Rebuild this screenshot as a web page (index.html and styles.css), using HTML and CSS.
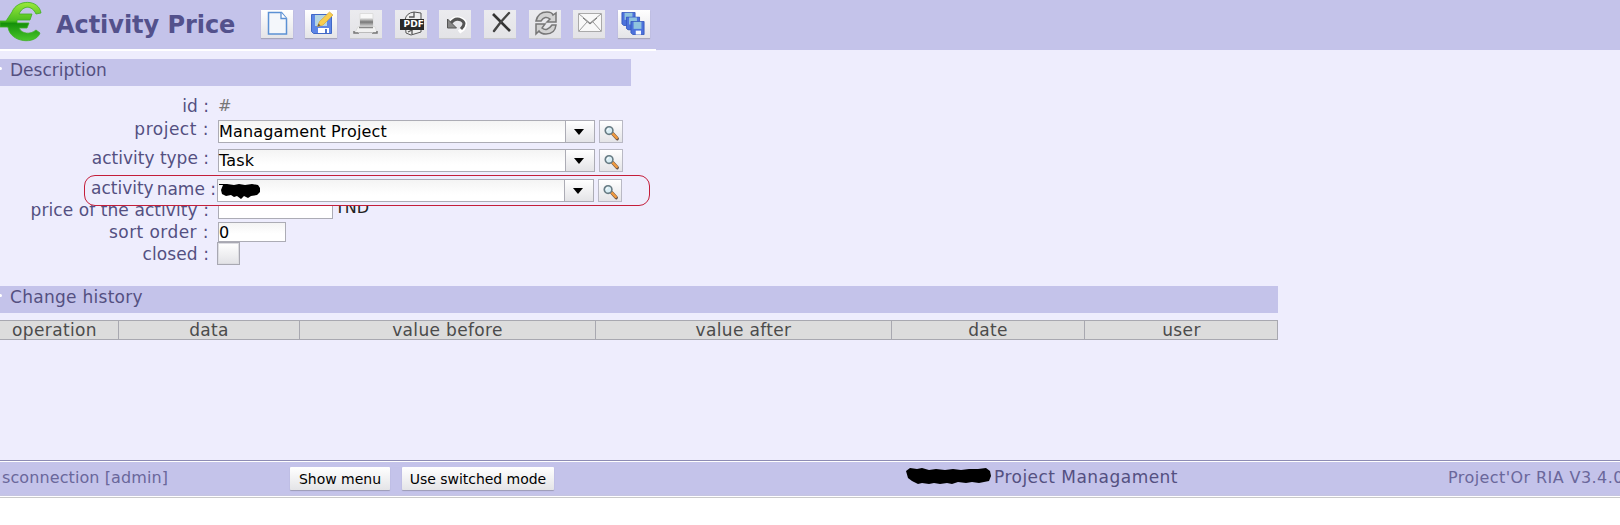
FILE: index.html
```html
<!DOCTYPE html>
<html lang="en">
<head>
<meta charset="utf-8">
<title>Activity Price</title>
<link rel="stylesheet" href="styles.css">
</head>
<body>
<svg width="0" height="0" class="defs" aria-hidden="true">
  <defs>
    <linearGradient id="green" x2="0" y2="1"><stop stop-color="#9be83c"/><stop offset=".48" stop-color="#4bbd20"/><stop offset=".55" stop-color="#15900a"/><stop offset="1" stop-color="#4ac72b"/></linearGradient>
    <linearGradient id="grey" x2="0" y2="1"><stop stop-color="#eee"/><stop offset=".5" stop-color="#777"/><stop offset="1" stop-color="#ccc"/></linearGradient>
    <symbol id="glass" viewBox="0 0 23 23">
      <path d="M13.500 13.500L18 18.500" stroke="#6b5348" stroke-width="3.600" stroke-linecap="round"/>
      <path d="M13 13L17.500 17.700" stroke="#ee993f" stroke-width="2.600" stroke-linecap="round"/>
      <circle cx="9.500" cy="10" r="4" fill="#d9eef5" stroke="#677b83" stroke-width="1.700"/>
      <path d="M7.500 10q0-2 2-2" fill="none" stroke="#fff"/>
    </symbol>
    <symbol id="disk" viewBox="0 0 16 16">
      <path d="M.5.5h15v15H2.500l-2-2z" fill="#4c72dc" stroke="#3458bd"/>
      <path d="M3.500 1h9v8h-9z" fill="#8fc3de"/><path d="M6 11h6v4.500H6z" fill="#f4f8ff"/>
    </symbol>
  </defs>
</svg>
<header class="toolbar">
  <svg class="logo" width="42" height="42" viewBox="0 0 42 42">
    <path d="M0 22H14V29L7 27H0z" fill="#168d0e"/>
    <path d="M41 13C39 -1 17-1 12 12L10 15L6 21H0V27H8C10 43 36 45 40 33L36 30C30 35 22 34 19 28H27L29 23H17V20H30L32 14H19C23 5 32 5 36 14Z" fill="url(#green)" stroke="#3fae25" stroke-width=".8"/>
  </svg>
  <h1 class="title">Activity Price</h1>
  <div class="tools">
    <span class="tool tool-new"><svg width="32" height="28" viewBox="0 0 32 28"><path d="M7.500 2.500h13l5 6v15.500h-18z" fill="#f4f7fb" stroke="#5b91d4" stroke-width="1.500"/><path d="M20 2.500v6h5.500" fill="#fff" stroke="#5b91d4" stroke-width="1.300"/></svg></span>
    <span class="tool tool-save"><svg width="31" height="28" viewBox="0 0 31 28"><path d="M6.500 4.500h20v19h-18l-2-2z" fill="#5d86e7" stroke="#4168c6"/><path d="M10 5h12v11H10z" fill="#b5d5e2"/><path d="M13 18h11v5H13z" fill="#fff"/><path d="M20 19h2v4h-2z" fill="#5277ce"/><path d="M12.500 16.500l2-5L24.500 2l3.500 3-10 10z" fill="#f8ce50" stroke="#d9a83b" stroke-width=".7"/><path d="M12.500 16.500l1-3 2 2z" fill="#725f37"/></svg></span>
    <span class="tool off"><svg width="31" height="28" viewBox="0 0 31 28"><path d="M10 3.500h13V17H10z" fill="#f8f8f8" stroke="#ddd"/><path d="M10 8h13v8H10z" fill="url(#grey)"/><path d="M8 16.500h17l2 6H5z" fill="#f1f1f1" stroke="#ddd"/><path d="M9 17.500h14" stroke="#888" stroke-width="1.500"/><path d="M4 21v2h5M27 21v2h-5" fill="none" stroke="#777" stroke-width="1.500"/><path d="M8 22.500h15" stroke="#bbb"/></svg></span>
    <span class="tool off"><svg width="32" height="28" viewBox="0 0 32 28"><path d="M10 10q1-7 9-8l7 1v19l-10 3-5-2z" fill="#eee" stroke="#555"/><path d="M19 2v5h-5M17 20v4M13 22l6-3" fill="none" stroke="#555" stroke-width="1.300"/><path d="M5 9h24v11H5z" fill="#292929"/></svg><span class="pdf">PDF</span></span>
    <span class="tool off"><svg width="32" height="28" viewBox="0 0 32 28"><path d="M10 14q5-8 12-5t2 10l-4 3" fill="none" stroke="#fff" stroke-width="4"/><path d="M11 14q5-7 11-4t0 9" fill="none" stroke="#555" stroke-width="3"/><path d="M8.500 9v9h9z" fill="#888" stroke="#555"/></svg></span>
    <span class="tool off"><svg width="31" height="28" viewBox="0 0 31 28"><path d="M9 4L26 21" stroke="#333" stroke-width="2.600"/><path d="M25 3Q17 11 10 21" fill="none" stroke="#444" stroke-width="2.400" stroke-linecap="round"/></svg></span>
    <span class="tool off"><svg width="31" height="28" viewBox="0 0 31 28"><g fill="#d2d2d2" stroke="#777" stroke-width="1.500"><path d="M7 11Q9 2 18 2Q23 2 24 5L27 3V12H18L21 9Q16 5 12 11Z"/><path d="M27 15Q26 24 17 24Q12 24 10 21L7 24V14H16L13 18Q18 22 23 15Z"/></g></svg></span>
    <span class="tool off"><svg width="32" height="28" viewBox="0 0 32 28"><path d="M5.500 3.500h23v18h-23z" fill="#f8f8f8" stroke="#aaa"/><path d="M6 4l11 9L28 4M6 21l8-9M28 21l-8-9" fill="none" stroke="#999"/><path d="M10 8l7 6 7-6" fill="none" stroke="#777"/></svg></span>
    <span class="tool tool-multi"><svg width="32" height="28" viewBox="0 0 32 28"><use href="#disk" x="3" y="2" width="15" height="14"/><use href="#disk" x="7.500" y="6.500" width="15" height="14"/><use href="#disk" x="12" y="11" width="15" height="14"/></svg></span>
  </div>
  <div class="toolbar-line"></div>
</header>
<main class="content">
  <h2 class="section section-desc"><i class="caret"></i><span>Description</span></h2>
  <form class="form">
    <div class="row row-id"><label>id :</label><span class="hash">#</span></div>
    <div class="row row-project"><label>project :</label><div class="combo"><span class="field">Managament Project</span><span class="drop"></span></div><span class="search"><svg width="22" height="22"><use href="#glass"/></svg></span></div>
    <div class="row row-type"><label>activity type :</label><div class="combo"><span class="field">Task</span><span class="drop"></span></div><span class="search"><svg width="22" height="22"><use href="#glass"/></svg></span></div>
    <div class="row row-name"><label><span>activity</span><span>name :</span></label><div class="combo"><span class="field"><svg width="42" height="16" viewBox="0 0 42 16"><path d="M0 1.500h8" stroke="#000"/><path d="M4 2L8 1 15 2 20 1 26 2 33 1 39 2 41 5V9L38 12 32 13 29 15 25 13 22 16 18 13 15 14 12 12 7 13 3 11 2 7Z"/></svg></span><span class="drop"></span></div><span class="search"><svg width="22" height="22"><use href="#glass"/></svg></span></div>
    <div class="row row-price"><label>price of the activity :</label><span class="box box-price"></span><span class="unit">TND</span></div>
    <div class="row row-sort"><label>sort order :</label><span class="box box-sort">0</span></div>
    <div class="row row-closed"><label>closed :</label><span class="check"></span></div>
  </form>
  <h2 class="section section-history"><i class="caret"></i><span>Change history</span></h2>
  <div class="history">
    <span class="col-op">operation</span><span>data</span><span>value before</span><span>value after</span><span>date</span><span>user</span>
  </div>
</main>
<footer class="footer">
  <span class="user">sconnection [admin]</span>
  <span class="btn btn-show">Show menu</span>
  <span class="btn btn-mode">Use switched mode</span>
  <span class="project"><svg width="87" height="18" viewBox="0 0 87 18"><path d="M1 4L5 1 12 2 17 1 24 3 31 2 40 3 48 2 56 3 64 2 73 2 81 1 85 4 86 9 84 14 79 15 74 16 67 15 61 16 53 15 47 17 42 16 35 17 29 16 24 17 17 16 13 17 7 14 3 11Z"/></svg><span>Project Managament</span></span>
  <span class="version">Project'Or RIA V3.4.0</span>
</footer>
</body>
</html>
```
FILE: styles.css
```css
* { box-sizing: border-box; }
body { margin: 0; width: 1620px; height: 525px; overflow: hidden; background: #fff; font: 17px/20px "DejaVu Sans", sans-serif; color: #545081; white-space: nowrap; }
.defs { position: absolute; }
svg { display: block; }
h1, h2 { margin: 0; }

.toolbar { position: relative; display: flex; height: 50px; background: #c4c3ea; }
.toolbar-line { position: absolute; left: 0; bottom: -1px; width: 656px; height: 2px; background: #fff; }
.logo { flex: none; }
.title { width: 204px; padding: 11px 0 0 14px; font-size: 24px; line-height: 29px; letter-spacing: -.05px; color: #53518c; }
.tools { display: flex; gap: 12.7px; padding: 10px 0 0 14.5px; }
.tool { position: relative; width: 32px; height: 28px; background: linear-gradient(#fff, #e4e4e7); box-shadow: 0 1px 1px #a7a6bc; }
.off { background: linear-gradient(#ebebef, #e3e3e6); box-shadow: 0 1px 0 #c9c9cf; }
.pdf { position: absolute; left: 9px; top: 9px; font: bold 9px/11px "DejaVu Sans", sans-serif; color: #fff; }

.content { height: 410px; padding-top: 9px; background: #eeedfd; }
.section { display: flex; align-items: flex-start; height: 27px; padding: 1px 0 0; background: #c4c3ea; font-size: 17px; line-height: 20px; font-weight: normal; }
.section-desc { width: 631px; }
.section-history { width: 1278px; margin-top: 17px; letter-spacing: .28px; }
.caret { width: 2px; height: 3px; margin: 7px 8px 0 0; background: #fff; border-radius: 0 2px 2px 0; }

.form { height: 183px; padding-top: 10px; }
.row { display: flex; align-items: flex-start; }
.row label { width: 218px; padding-right: 9px; text-align: right; }
.row-id { height: 22px; }
.hash { color: #777; font-size: 16px; }
.row-project { height: 31px; padding-top: 2px; }
.row-type { height: 26px; }
.row-project label { letter-spacing: .5px; }
.row-project label, .row-type label { margin-top: -1px; }
.combo { display: flex; width: 377px; height: 23px; border: 1px solid #acacb5; background: #fff; color: #000; }
.field { width: 346px; height: 21px; font-size: 16px; line-height: 22px; letter-spacing: .15px; background: linear-gradient(#f4f4f4, #fff 70%); }
.drop { display: flex; flex: 1; align-items: center; justify-content: center; border-left: 1px solid #acacb5; background: linear-gradient(#fff, #e4e4e7); }
.drop::after { content: ""; margin-right: 2px; border: 5px solid transparent; border-top: 6px solid #000; border-bottom: 0; }
.search { display: block; width: 24px; height: 23px; margin-left: 4px; border: 1px solid #b9b9c4; background: linear-gradient(#fff, #e4e4e7); }
.row-name { position: relative; z-index: 1; width: 566px; height: 31px; margin-left: 84px; padding-top: 3px; border: 1px solid #c41e3a; border-radius: 11px; background: #eeedfd; }
.row-name label { display: flex; width: 132px; margin-top: -1px; padding: 0 0 0 6px; }
.row-name label span + span { margin-left: 3px; padding-top: 1px; }
.row-name .field { padding: 3px 0 0 1px; }
.row-price { height: 21px; margin-top: -6px; }
.row-price label { letter-spacing: .08px; }
.box { height: 20px; border: 1px solid #acacb5; background: linear-gradient(#f4f4f4, #fff 60%); color: #000; font-size: 16px; line-height: 19px; }
.box-price { width: 115px; height: 19px; background: #fff; }
.box-sort { width: 68px; }
.unit { margin: -2px 0 0 2px; color: #222; font-size: 16px; }
.row-sort { height: 21px; padding-top: 1px; }
.row-sort label { letter-spacing: .43px; }
.row-closed label { width: 217px; padding-right: 8px; padding-top: 2px; letter-spacing: .1px; }
.check { width: 23px; height: 23px; border: 1px solid #a8a8b2; background: linear-gradient(#fff, #e2e2e6); box-shadow: inset 0 0 0 1px #dcdce1; }

.history { display: grid; grid-template-columns: 119px 181px 296px 296px 193px 193px; width: 1278px; margin-top: 7px; border: 1px solid #a8a8b0; border-left: 0; background: #dcdcdc; color: #4b4b4b; letter-spacing: .35px; }
.history span { height: 18px; line-height: 18px; text-align: center; border-right: 1px solid #a8a8b0; }
.history span:last-child { border: 0; }
.history .col-op { padding-right: 9px; }

.footer { display: flex; align-items: flex-start; height: 38px; padding-top: 6px; border-top: 1px solid #8e8cb4; border-bottom: 1px solid #c9c9c9; background: linear-gradient(#fff 1px, #c4c3ea 1px 33px, #c6c5df 35px, #fff 35px); }
.footer > * { flex-shrink: 0; }
.user { width: 290px; padding: 1px 0 0 2px; font-size: 16px; letter-spacing: .1px; color: #6a679b; }
.btn { height: 23px; border-radius: 1px; background: linear-gradient(#fff, #e4e4e7); box-shadow: 0 1px 1px #9d9cb5; color: #000; font-size: 14px; line-height: 25px; letter-spacing: -.03px; text-align: center; }
.btn-show { width: 100px; }
.btn-mode { width: 152px; margin-left: 12px; }
.project { display: flex; width: 543px; margin-left: 351px; gap: 2px; letter-spacing: .47px; }
.version { padding-top: 1px; font-size: 16px; letter-spacing: .42px; color: #6a679b; }
```
